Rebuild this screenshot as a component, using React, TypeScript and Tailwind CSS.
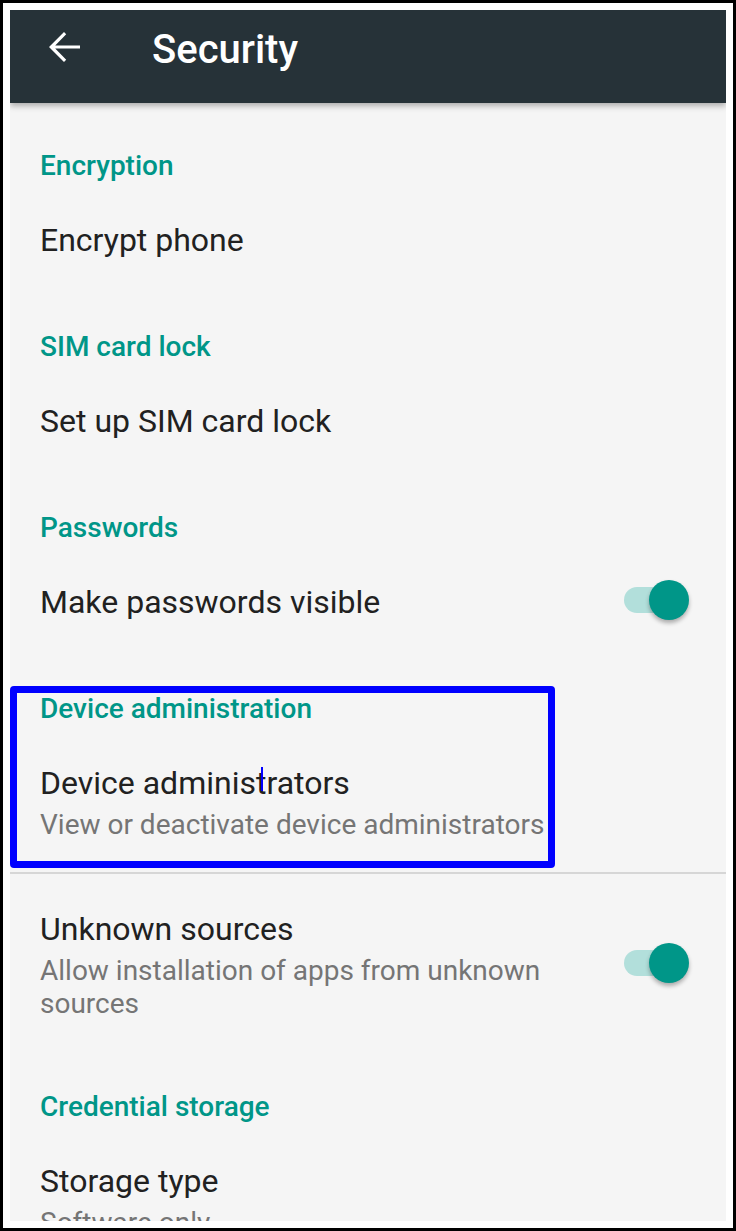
import React from 'react';

const font = { fontFamily: 'Roboto, "Noto Sans", sans-serif' };

function Category({ label, first }: { label: string; first?: boolean }) {
    return (
        <div className={`${first ? 'pt-[47px]' : 'pt-[71px]'} pb-[38px] pl-[30px]`}>
            <div className="text-[28px] leading-[32px] font-medium text-[#009688]">{label}</div>
        </div>
    );
}

function Toggle() {
    return (
        <div className="relative w-[65px] h-[40px] shrink-0">
            <div className="absolute left-0 top-[7px] w-[58px] h-[26px] rounded-full bg-[#b2dfdb]"></div>
            <div className="absolute right-0 top-0 w-[40px] h-[40px] rounded-full bg-[#009688] shadow-[0_3px_4px_rgba(0,0,0,0.3)]"></div>
        </div>
    );
}

function Item({ title, summary, toggle }: { title: string; summary?: string; toggle?: boolean }) {
    return (
        <div className="flex items-center pl-[30px] pr-[37px]">
            <div className={toggle ? 'w-[560px]' : 'flex-1'}>
                <div className="text-[32px] leading-[40px] text-[#212121]">{title}</div>
                {summary && (
                    <div className="mt-[5px] text-[28px] leading-[33px] text-[#757575]">{summary}</div>
                )}
            </div>
            {toggle && (
                <div className="ml-auto -translate-y-[2px]">
                    <Toggle />
                </div>
            )}
        </div>
    );
}

export default function App() {
    return (
        <div className="w-[736px] h-[1231px] border-[3px] border-black bg-white p-[7px]" style={font}>
            <div className="relative h-full overflow-hidden bg-[#f5f5f5]">
                {/* toolbar */}
                <div className="relative z-10 h-[93px] bg-[#263238] flex items-start pt-[16px] shadow-[0_3px_6px_rgba(0,0,0,0.3)]">
                    <svg viewBox="0 0 24 24" className="ml-[30px] -mt-[3px] w-[48px] h-[48px]" fill="#ffffff">
                        <path d="M20 11.2H7.6l5.5-5.6L12 4.5l-7.5 7.5 7.5 7.5 1.1-1.1-5.5-5.6H20v-1.6z" />
                    </svg>
                    <div className="ml-[64px] text-[40px] leading-[48px] font-medium text-white">Security</div>
                </div>

                <Category label="Encryption" first />
                <Item title="Encrypt phone" />

                <Category label="SIM card lock" />
                <Item title="Set up SIM card lock" />

                <Category label="Passwords" />
                <Item title="Make passwords visible" toggle />

                <Category label="Device administration" />
                <Item title="Device administrators" summary="View or deactivate device administrators" />

                <div className="mt-[31px] h-[2px] bg-[#d6d6d6]"></div>

                <div className="pt-[35px]">
                    <Item title="Unknown sources" summary="Allow installation of apps from unknown sources" toggle />
                </div>

                <Category label="Credential storage" />
                <Item title="Storage type" summary="Software only" />

                {/* highlight box drawn over the list */}
                <div className="absolute left-0 top-[676px] w-[545px] h-[182px] border-[7px] border-[#0000ff] rounded-[4px]"></div>
                <div className="absolute left-[251px] top-[757px] w-[2px] h-[24px] bg-[#0000ff]"></div>
            </div>
        </div>
    );
}
